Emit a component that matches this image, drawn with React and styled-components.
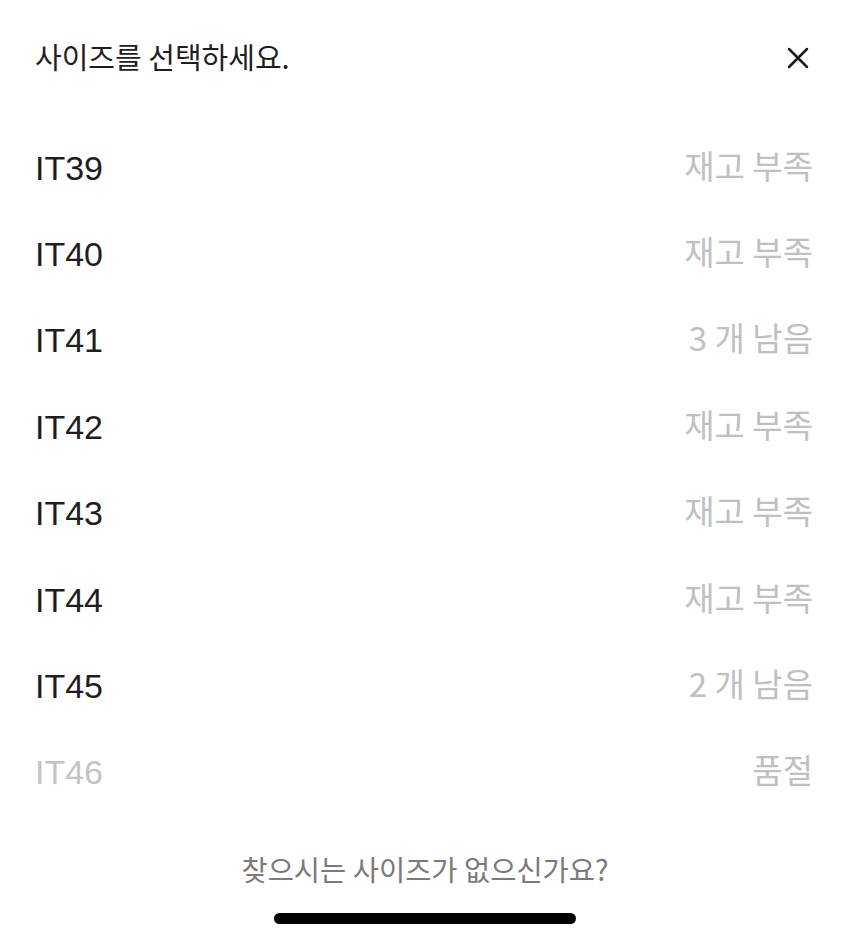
import React from "react";
import styled, { createGlobalStyle } from "styled-components";

const sizes = [
  { name: "IT39", status: "재고 부족" },
  { name: "IT40", status: "재고 부족" },
  { name: "IT41", status: "3 개 남음" },
  { name: "IT42", status: "재고 부족" },
  { name: "IT43", status: "재고 부족" },
  { name: "IT44", status: "재고 부족" },
  { name: "IT45", status: "2 개 남음" },
  { name: "IT46", status: "품절", soldOut: true },
];

const App = () => {
  return (
    <>
      <GlobalStyle />
      <Sheet>
        <Header>
          <Title>사이즈를 선택하세요.</Title>
          <CloseButton aria-label="닫기">
            <svg width="24" height="24" viewBox="0 0 24 24">
              <path
                d="M3 3 L21 21 M21 3 L3 21"
                stroke="#1c1c1c"
                strokeWidth="2.5"
                strokeLinecap="round"
              />
            </svg>
          </CloseButton>
        </Header>
        <List>
          {sizes.map((s) => (
            <Row key={s.name}>
              <SizeName $soldOut={s.soldOut}>{s.name}</SizeName>
              <Status>{s.status}</Status>
            </Row>
          ))}
        </List>
        <Footer>
          <Help>찾으시는 사이즈가 없으신가요?</Help>
          <HomeBar />
        </Footer>
      </Sheet>
    </>
  );
};

export default App;

const GlobalStyle = createGlobalStyle`
  body {
    margin: 0;
    background: #ffffff;
    font-family: "Inter", "Noto Sans CJK KR", sans-serif;
  }
`;

const Sheet = styled.div`
  width: 850px;
  height: 941px;
  display: flex;
  flex-direction: column;
  background: #fff;
  overflow: hidden;
`;

const Header = styled.div`
  display: flex;
  align-items: center;
  justify-content: space-between;
  height: 58px;
  padding: 29px 40px 0 35px;
`;

const Title = styled.h1`
  margin: 0 0 4px;
  font-family: "Noto Sans CJK KR", sans-serif;
  font-weight: 400;
  font-size: 29px;
  color: #1e1e1e;
`;

const CloseButton = styled.button`
  border: none;
  background: none;
  padding: 0;
  width: 24px;
  height: 24px;
  display: flex;
  cursor: pointer;
`;

const List = styled.div`
  display: flex;
  flex-direction: column;
  padding: 38px 37px 0 35px;
`;

const Row = styled.div`
  display: flex;
  align-items: center;
  justify-content: space-between;
  height: 86.4px;
`;

const SizeName = styled.span`
  font-family: "Liberation Sans", "Noto Sans CJK KR", sans-serif;
  font-size: 34px;
  color: ${({ $soldOut }) => ($soldOut ? "#c4c4c4" : "#1e1e1e")};
`;

const Status = styled.span`
  padding-bottom: 7px;
  font-family: "Noto Sans CJK KR", sans-serif;
  font-size: 33px;
  color: #c0c0c0;
`;

const Footer = styled.div`
  display: flex;
  flex-direction: column;
  align-items: center;
  padding-top: 32px;
`;

const Help = styled.div`
  font-family: "Noto Sans CJK KR", sans-serif;
  font-size: 28.5px;
  color: #7a7a7a;
`;

const HomeBar = styled.div`
  margin-top: 24px;
  width: 302px;
  height: 11px;
  border-radius: 6px;
  background: #000;
`;
